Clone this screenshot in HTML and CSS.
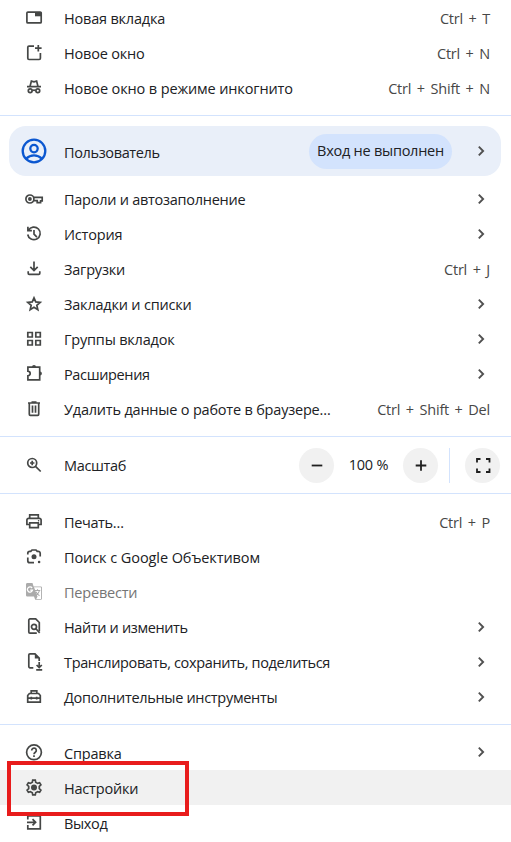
FILE: index.html
```html
<!DOCTYPE html>
<html lang="ru">
<head>
<meta charset="utf-8">
<title>Меню</title>
<link rel="stylesheet" href="styles.css">
</head>
<body>
<svg class="defs" width="0" height="0">
  <symbol id="chev" viewBox="0 0 10 12"><path d="M2.800 1.700 7.100 6 2.800 10.300" fill="none" stroke="#505050" stroke-width="1.9"/></symbol>
</svg>
<nav class="menu">
  <div class="group">
    <div class="row"><svg class="icon" viewBox="0 0 20 20"><rect x="2.900" y="4.100" width="14.300" height="10.800" rx="1"/><path class="f" d="M11 4h6.500v4.300H11z"/></svg><span class="label">Новая вкладка</span><span class="key">Ctrl + T</span></div>
    <div class="row"><svg class="icon" viewBox="0 0 20 20"><path d="M10 3.100H5a1.200 1.200 0 0 0-1.200 1.200v11A1.200 1.200 0 0 0 5 16.500h10.200a1.200 1.200 0 0 0 1.200-1.200V10M14.300 2v6.500M11 5.200h6.600"/></svg><span class="label">Новое окно</span><span class="key">Ctrl + N</span></div>
    <div class="row"><svg class="icon" viewBox="0 0 20 20"><path d="M3 8.700h14M6 8.500l1.400-5.400 2.600.7 2.600-.7L14 8.500M8.300 12.500q1.700-.8 3.400 0"/><circle cx="6.200" cy="12.800" r="1.900"/><circle cx="13.800" cy="12.800" r="1.900"/></svg><span class="label loose">Новое окно в режиме инкогнито</span><span class="key">Ctrl + Shift + N</span></div>
  </div>
  <div class="user">
    <svg class="avatar" viewBox="0 0 26 26"><circle cx="13" cy="13" r="11.300"/><circle cx="13" cy="10.600" r="3.700"/><path d="M5.200 20.600Q8.400 17.400 13 17.400t7.800 3.200"/></svg>
    <span class="label tight">Пользователь</span><span class="pill">Вход не выполнен</span><svg class="chev"><use href="#chev"/></svg>
  </div>
  <div class="group">
    <div class="row"><svg class="icon" viewBox="0 0 20 20"><path d="M9.700 8.400h8.500v3.500h-1.600v1.700h-3.400v-1.900H9.700"/><circle cx="5.900" cy="10" r="4"/><circle class="f" cx="5.900" cy="10" r="1.900"/></svg><span class="label snug">Пароли и автозаполнение</span><svg class="chev"><use href="#chev"/></svg></div>
    <div class="row"><svg class="icon" viewBox="0 0 20 20"><path d="M3.900 2.700v4h4M4.400 6.300a6.300 6.300 0 1 1-.7 4.200M10 6v4.200l2.900 2.900"/></svg><span class="label">История</span><svg class="chev"><use href="#chev"/></svg></div>
    <div class="row"><svg class="icon" viewBox="0 0 20 20"><path d="M10 2.500v8.700M6.300 7.800l3.700 3.700 3.700-3.700M4.200 12.200v2.100a1 1 0 0 0 1 1h9.600a1 1 0 0 0 1-1v-2.100"/></svg><span class="label">Загрузки</span><span class="key">Ctrl + J</span></div>
    <div class="row"><svg class="icon" viewBox="0 0 20 20"><path d="m10 3.800 1.750 4.100 4.450.4-3.380 2.950 1 4.400L10 13.300l-3.820 2.350 1-4.400L3.800 8.300l4.450-.4z"/></svg><span class="label">Закладки и списки</span><svg class="chev"><use href="#chev"/></svg></div>
    <div class="row"><svg class="icon" viewBox="0 0 20 20"><path d="M3.800 3.500h4.500V8H3.800zM11.800 3.500h4.500V8h-4.500zM3.800 11.500h4.500V16H3.800zM11.800 11.500h4.500V16h-4.500z"/></svg><span class="label">Группы вкладок</span><svg class="chev"><use href="#chev"/></svg></div>
    <div class="row"><svg class="icon" viewBox="0 0 20 20"><path d="M3.900 3.200h11.800v12.600H3.900v-4q2.300-.4 2.300-2.300T3.900 7.200z"/><path class="f" d="M8 3a2 2 0 0 1 4 0zM15.900 7.400a2 2 0 0 1 0 4z"/></svg><span class="label tight">Расширения</span><svg class="chev"><use href="#chev"/></svg></div>
    <div class="row"><svg class="icon" viewBox="0 0 20 20"><path d="M4 4h12M7.500 3h5M5.300 4v11.300a1 1 0 0 0 1 1h7.400a1 1 0 0 0 1-1V4M8.500 6.500v7.200M11.500 6.500v7.200"/></svg><span class="label">Удалить данные о работе в браузере…</span><span class="key">Ctrl + Shift + Del</span></div>
  </div>
  <div class="zoom">
    <svg class="icon" viewBox="0 0 20 20"><circle cx="8.200" cy="8" r="4.500"/><path d="m11.500 11.300 5.200 5.200M8.200 5.800v4.400M6 8h4.400"/></svg><span class="label tight">Масштаб</span>
    <span class="btn"><svg viewBox="0 0 18 18"><path d="M3.700 9.500h10.600"/></svg></span><span class="percent">100 %</span><span class="btn"><svg viewBox="0 0 18 18"><path d="M3.700 9.500h10.600M9 4.200v10.600"/></svg></span><span class="bar"></span><span class="btn"><svg viewBox="0 0 18 18"><path d="M3 6.500V3h3.500M12 3h3.500v3.500M15.500 12.500V16H12M6.500 16H3v-3.500"/></svg></span>
  </div>
  <div class="group">
    <div class="row"><svg class="icon" viewBox="0 0 20 20"><path d="M5.700 6V2.800h8.600V6M5.700 12.500H2.900V8a1.700 1.700 0 0 1 1.700-1.700h10.800A1.700 1.700 0 0 1 17.100 8v4.500h-2.800M5.700 10.800h8.600v4.800H5.700z"/><circle class="f" cx="14.600" cy="8.700" r=".8"/></svg><span class="label tight">Печать…</span><span class="key">Ctrl + P</span></div>
    <div class="row"><svg class="icon" viewBox="0 0 20 20"><path d="M3.800 7.500V6.300a2 2 0 0 1 2-2h1L8 3h4l1.200 1.300h1a2 2 0 0 1 2 2v3.200M3.800 10.500v3.200a2 2 0 0 0 2 2H10"/><circle class="f" cx="10" cy="9.800" r="2.500"/><circle class="f" cx="15.100" cy="15" r="1.300"/></svg><span class="label looser">Поиск с Google Объективом</span></div>
    <div class="row off"><svg class="icon" viewBox="0 0 20 20"><path class="f" d="M3 1h5.500l1.100 3.500h7.200A1.300 1.300 0 0 1 18 5.800v10.700a1.300 1.300 0 0 1-1.300 1.300h-5.500L10 14.500H3.200A1.300 1.300 0 0 1 2 13.200V2.200A1.200 1.200 0 0 1 3 1z"/><path class="cut" d="M10 5.300h6.500q.6 0 .6.600v10.500q0 .6-.6.600h-4.200l1.200-2.500z"/><path class="g" d="M8.100 6a2.600 2.600 0 1 0 .4 2.200H6.200"/><path class="t" d="M11 8.500h5.300M13.500 7.200v1.300M15.500 8.500q-.7 3-3.500 5M12 9.800q1.200 2.500 3.500 4"/></svg><span class="label">Перевести</span></div>
    <div class="row"><svg class="icon" viewBox="0 0 20 20"><path d="M12.800 16.200H6a1.200 1.200 0 0 1-1.200-1.200V3.100A1.200 1.200 0 0 1 6 1.900h5.700l3.600 3.600v8.800"/><circle cx="10" cy="9.800" r="2.500"/><path d="m11.700 11.500 4 4.300"/></svg><span class="label tight">Найти и изменить</span><svg class="chev"><use href="#chev"/></svg></div>
    <div class="row"><svg class="icon" viewBox="0 0 20 20"><path d="M9.300 15.800H6a1.200 1.200 0 0 1-1.200-1.200V3A1.200 1.200 0 0 1 6 1.800h5l4.200 4.200v3M15.200 10v5.500M12.600 13l2.600 2.600 2.600-2.600M12.200 17.900h6"/><path class="f" d="M10.800 1.800v4.600h4.600z"/></svg><span class="label tight">Транслировать, сохранить, поделиться</span><svg class="chev"><use href="#chev"/></svg></div>
    <div class="row"><svg class="icon" viewBox="0 0 20 20"><path d="M7.200 6.300V3.900h5.600v2.400M3.700 15.200V8.500l1.700-2h9.200l1.700 2v6.700zM3.700 11.200h12.600M7.300 9.700v2.800M12.700 9.700v2.800"/></svg><span class="label close">Дополнительные инструменты</span><svg class="chev"><use href="#chev"/></svg></div>
  </div>
  <div class="group last">
    <div class="row"><svg class="icon" viewBox="0 0 20 20"><circle cx="10" cy="10.300" r="7.400"/><path d="M7.700 8.500a2.300 2.300 0 1 1 3.600 1.800q-1.300.9-1.300 2M10 13.300v1.600"/></svg><span class="label">Справка</span><svg class="chev"><use href="#chev"/></svg></div>
    <div class="row active"><svg class="icon" viewBox="0 0 20 20"><path d="m8.300 5.300.4-2.100h2.600l.4 2.100 1.900 1.100 2-.7 1.300 2.200-1.600 1.500v2.200l1.600 1.500-1.300 2.200-2-.7-1.900 1.100-.4 2.100H8.700l-.4-2.100-1.900-1.100-2 .7-1.300-2.200 1.600-1.500V9.400L3.100 7.900l1.300-2.200 2 .7z"/><circle class="f" cx="10" cy="10.500" r="3"/></svg><span class="label">Настройки</span><span class="frame"></span></div>
    <div class="row"><svg class="icon" viewBox="0 0 20 20"><path d="M3.800 7.500V3.800h12.500v13H3.800v-3.700M3 10.300h8.500M8.500 7.200l3.100 3.100-3.100 3.100"/></svg><span class="label tight">Выход</span></div>
  </div>
</nav>
</body>
</html>
```
FILE: styles.css
```css
* { box-sizing: border-box; }
body {
  margin: 0;
  width: 511px;
  height: 842px;
  overflow: hidden;
  background: #fff;
  color: #202124;
  font: 14.5px/20px "Open Sans", "Noto Sans", sans-serif;
  letter-spacing: -0.2px;
}
.defs { position: absolute; }
.menu { padding-top: 1px; }
.group { padding-bottom: 9px; }
.row {
  display: flex;
  align-items: center;
  height: 35px;
  padding: 0 21px 0 24px;
  white-space: nowrap;
  position: relative;
}
.icon {
  width: 20px;
  height: 20px;
  margin: -1px 20px 0 0;
  flex: none;
  overflow: visible;
  fill: none;
  stroke: #454746;
  stroke-width: 1.7;
}
.icon .f { fill: #454746; stroke: none; }
.label { flex: 1; padding-top: 1px; }
.tight { letter-spacing: -0.36px; }
.close { letter-spacing: -0.31px; }
.snug { letter-spacing: -0.26px; }
.loose { letter-spacing: -0.13px; }
.looser { letter-spacing: -0.08px; }
.key { color: #474747; padding-top: 1px; word-spacing: 2px; }
.chev {
  width: 10px;
  height: 12px;
  margin: -2px 4px 0 0;
  flex: none;
}
.user {
  display: flex;
  align-items: center;
  height: 50px;
  margin: 11px 10px 6px 9px;
  padding: 0 11px 0 12px;
  border-radius: 17px;
  background: #e9eff9;
}
.group:first-child { border-bottom: 1px solid #d3e3fd; height: 115px; }
.group:first-child + .user { margin-top: 10px; }
.avatar {
  width: 26px;
  height: 26px;
  margin-right: 17px;
  fill: none;
  stroke: #0b57d0;
  stroke-width: 2.3;
}
.user .label { padding-top: 3px; }
.pill {
  height: 35px;
  line-height: 34px;
  width: 143px;
  text-align: center;
  border-radius: 18px;
  background: #d3e3fd;
  margin-right: 24px;
  letter-spacing: -0.25px;
}
.user .chev { margin-top: 0; }
.zoom {
  display: flex;
  align-items: center;
  height: 58px;
  padding: 0 11px 0 24px;
  border: solid #d3e3fd;
  border-width: 1px 0;
}
.btn {
  width: 35px;
  height: 35px;
  border-radius: 50%;
  background: #f1f1f1;
  display: grid;
  place-items: center;
}
.btn svg {
  width: 18px;
  height: 18px;
  fill: none;
  stroke: #1f1f1f;
  stroke-width: 1.8;
}
.percent { width: 69px; text-align: center; }
.bar { width: 1px; height: 35px; background: #d3e3fd; margin: 0 15px 0 11px; }
.zoom + .group { padding-top: 11px; }
.last { border-top: 1px solid #d3e3fd; padding-top: 10px; }
.last .label { padding-top: 3px; }
.off { color: #757575; }
.off .icon { stroke: #ababab; }
.off .icon .f { fill: #ababab; }
.off .icon .cut { fill: #fff; stroke: none; }
.off .icon .g { stroke: #fff; stroke-width: 1.3; }
.off .icon .t { stroke-width: 1.1; }
.active { background: #f1f1f1; }
.frame {
  position: absolute;
  left: 7px;
  top: -9px;
  width: 182px;
  height: 55px;
  border: 4px solid #e81c1c;
  z-index: 2;
}
```
